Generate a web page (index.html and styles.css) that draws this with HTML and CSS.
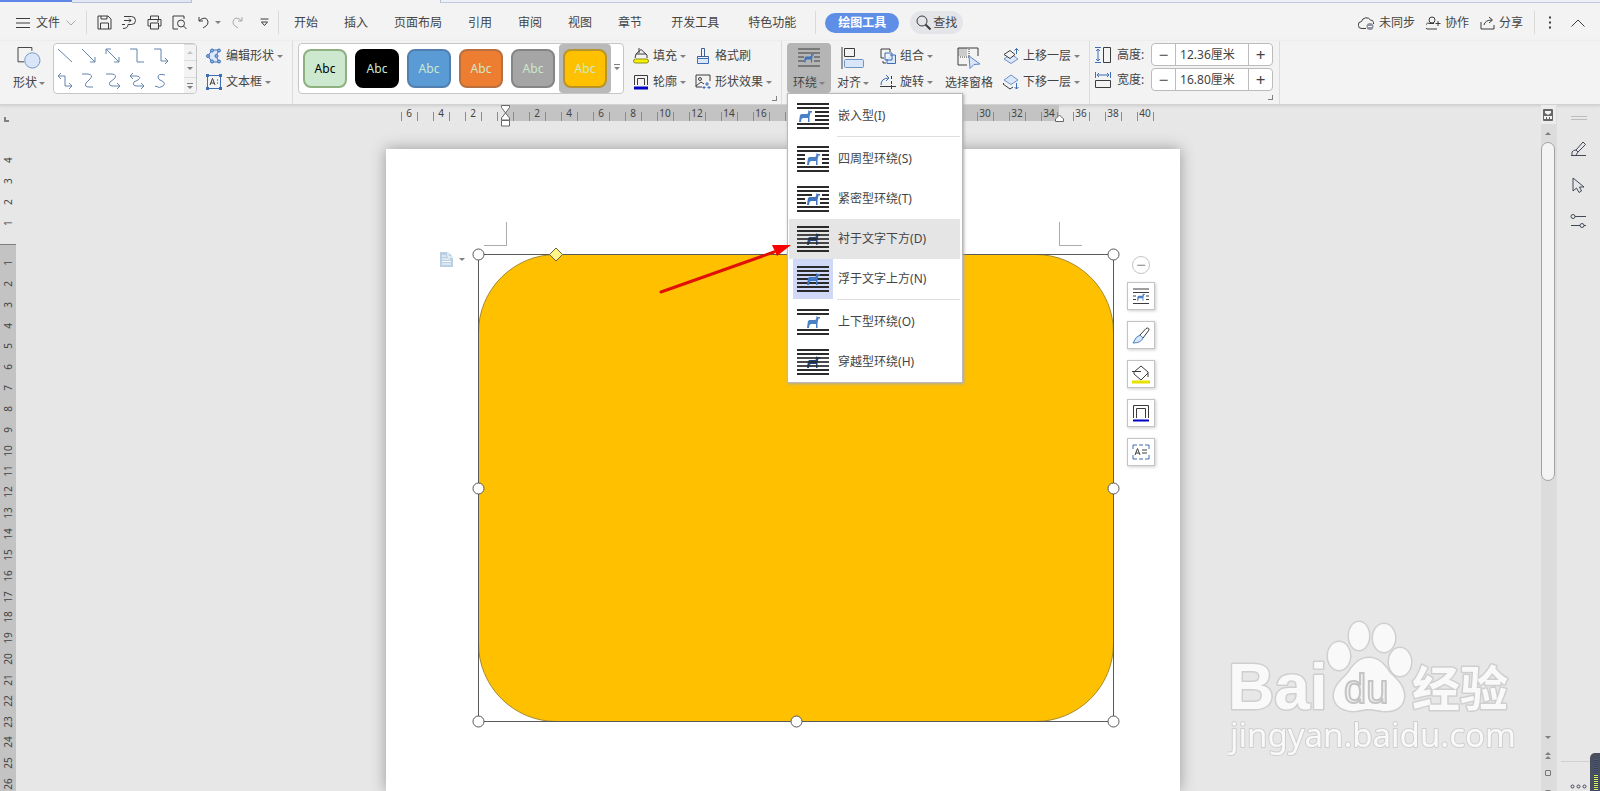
FILE: index.html
```
<!DOCTYPE html>
<html lang="zh-CN">
<head>
<meta charset="utf-8">
<title>绘图工具</title>
<link rel="stylesheet" href="styles.css">
</head>
<body>
  <svg class="defs" aria-hidden="true">
    <symbol id="dog" viewBox="0 0 13 12"><path d="M0 12L.5 8 1 5 2.500 4H7.500L9 3.500 9.500 0 10.500 1H13V2.500H11.500L10.500 7V12H9V8H4L2.500 9 2 12Z"/></symbol>
    <symbol id="bars" viewBox="0 0 32 26"><path d="M0 1H32M0 5H32M0 21H32M0 25H32" stroke="#2b2b2b" stroke-width="2"/></symbol>
    <symbol id="bars-mid" viewBox="0 0 32 26"><path d="M0 9H32M0 13H32M0 17H32" stroke="#2b2b2b" stroke-width="2"/></symbol>
  </svg>

  <div class="doctabs"><span class="doctab active"></span><span class="doctab"></span><span class="doctab-gap"></span><span class="doctab-rest"></span></div>

  <header class="menubar">
    <button class="file"><svg width="14" height="12" viewBox="0 0 14 12"><path d="M0 1.500H14M0 6H14M0 10.500H14"/></svg>文件<svg class="light" width="10" height="6" viewBox="0 0 10 6"><path d="M.5 .5L5 5 9.500 .5"/></svg></button>
    <span class="vline"></span>
    <div class="quick">
      <button aria-label="保存"><svg width="15" height="15" viewBox="0 0 15 15"><path d="M1 1H11L14 4V14H1ZM4 1V4H10V1M3.500 14V8H11.500V14"/></svg></button>
      <button aria-label="输出"><svg width="15" height="15" viewBox="0 0 15 15"><path d="M2 1.500H9.500A4 4 0 0 1 9.500 9.500H6Q6 13.500 1 13.500M2 5.500H9M7 3.500L9 5.500 7 7.500M0 9.500H3"/></svg></button>
      <button aria-label="打印"><svg width="15" height="15" viewBox="0 0 15 15"><path d="M3.500 4V1H11.500V4M3.500 11H1V4.500H14V11H11.500M3.500 8H11.500V14H3.500ZM10 6H12"/></svg></button>
      <button aria-label="打印预览"><svg width="15" height="15" viewBox="0 0 15 15"><path d="M6 14H1V1H12V4M11.500 11L14.500 14"/><circle cx="9" cy="8.500" r="3.500"/></svg></button>
      <button class="drop" aria-label="撤销"><svg width="13" height="13" viewBox="0 0 13 13"><path d="M2 1V5H6M2 5Q5 2 8 2A4.500 4.500 0 0 1 9 10L6 12"/></svg><i class="caret"></i></button>
      <button class="light" aria-label="恢复"><svg width="13" height="13" viewBox="0 0 13 13"><path d="M11 1V5H7M11 5Q8 2 5 2A4.500 4.500 0 0 0 4 10L7 12"/></svg></button>
      <button aria-label="自定义"><svg width="9" height="9" viewBox="0 0 9 9"><path d="M.5 1H8.500M1.500 4H7.500L4.500 7.500Z"/></svg></button>
    </div>
    <span class="vline"></span>
    <nav>
      <a href="#">开始</a><a href="#">插入</a><a href="#">页面布局</a><a href="#">引用</a><a href="#">审阅</a><a href="#">视图</a><a href="#">章节</a>
    </nav>
    <nav class="more">
      <a href="#">开发工具</a><a href="#">特色功能</a>
    </nav>
    <span class="vline"></span>
    <button class="current">绘图工具</button>
    <button class="search"><svg width="15" height="15" viewBox="0 0 15 15"><circle cx="6" cy="6" r="5"/><path d="M9.500 9.500L14.500 14.500" stroke-width="2"/></svg>查找</button>
    <div class="account">
      <button><svg width="17" height="14" viewBox="0 0 17 14"><path d="M8 12.500H4A3.500 3.500 0 0 1 3.500 5.500 5 5 0 0 1 12.500 4 3.500 3.500 0 0 1 15.500 8"/><circle cx="12" cy="10.500" r="3.500" fill="#8d93a0" stroke="none"/><path d="M10 10.500H14" stroke="#fff"/></svg>未同步</button>
      <button><svg width="15" height="14" viewBox="0 0 15 14"><circle cx="6" cy="4" r="3"/><path d="M8 7.500H4A3 3 0 0 0 1 13H11M9.500 7.500H14.500M12 5V10"/></svg>协作</button>
      <button><svg width="15" height="14" viewBox="0 0 15 14"><path d="M1 6V13H14V9M4 9Q5 4 12 4M9 1L12.500 4 9 7"/></svg>分享</button>
      <span class="vline"></span>
      <button class="dots" aria-label="更多"><svg width="3" height="13" viewBox="0 0 3 13"><path d="M0 1.500H2M0 6.500H2M0 11.500H2" stroke-width="2"/></svg></button>
      <button aria-label="收起"><svg width="14" height="8" viewBox="0 0 14 8"><path d="M.5 7.500L7 1 13.500 7.500"/></svg></button>
    </div>
  </header>

  <div class="ribbon">
    <button class="tall shape"><svg width="24" height="23" viewBox="0 0 24 23"><path d="M15 4V.5H.5V15.500H7"/><circle cx="15.500" cy="14" r="8" fill="#d9e6fa" stroke="#6f93c4"/></svg><span>形状<i class="caret"></i></span></button>
    <div class="shapes">
      <div class="shapes-grid">
        <svg viewBox="0 0 16 16"><path d="M1 1L15 14"/></svg>
        <svg viewBox="0 0 16 16"><path d="M1 1L14 14M14 9V14H9"/></svg>
        <svg viewBox="0 0 16 16"><path d="M1 1L14 14M14 9V14H9M1 6V1H6"/></svg>
        <svg viewBox="0 0 16 16"><path d="M1 1H8V14H15"/></svg>
        <svg viewBox="0 0 16 16"><path d="M1 1H8V13H15M12 10L15 13 12 16"/></svg>
        <svg viewBox="0 0 16 16"><path d="M1 3H8V13H15M12 10L15 13 12 16M4 0L1 3 4 6"/></svg>
        <svg viewBox="0 0 16 16"><path d="M1 1H7Q13 2 9 6L5 10Q3 14 8 14H12"/></svg>
        <svg viewBox="0 0 16 16"><path d="M1 1H7Q13 2 9 6L5 9Q3 13 8 13H15M12 10L15 13 12 16"/></svg>
        <svg viewBox="0 0 16 16"><path d="M1 3H8Q13 4 9 7L5 9Q3 13 8 13H15M12 10L15 13 12 16M4 0L1 3 4 6"/></svg>
        <svg viewBox="0 0 16 16"><path d="M12 2Q5 0 5 4 5 7 9 8 13 10 10 13 7 16 2 13"/></svg>
      </div>
      <div class="shapes-scroll">
        <button aria-label="上"><i class="caret up"></i></button>
        <button aria-label="下"><i class="caret"></i></button>
        <button aria-label="展开"><i class="caret bar"></i></button>
      </div>
    </div>
    <div class="pair">
      <button><svg width="16" height="16" viewBox="0 0 16 16"><path d="M6 2H13L10 8 13 14H6L2 8Z" fill="#dbe8fb" stroke="#3d6db5"/><g fill="#8fb4ee" stroke="#3d6db5"><circle cx="6" cy="2.500" r="1.500"/><circle cx="13" cy="2.500" r="1.500"/><circle cx="2" cy="8" r="1.500"/><circle cx="10.500" cy="8" r="1.500"/><circle cx="6" cy="13.500" r="1.500"/><circle cx="13" cy="13.500" r="1.500"/></g></svg>编辑形状<i class="caret"></i></button>
      <button><svg width="16" height="16" viewBox="0 0 16 16"><path d="M1.500 1.500H14.500V14.500H1.500Z" stroke="#3d6db5"/><path d="M4 11L6.500 4.500 9 11M5 9H8M11 6H12M11 9H12"/><path d="M0 0H3V3H0ZM13 0H16V3H13ZM0 13H3V16H0ZM13 13H16V16H13Z" fill="#3d6db5" stroke="none"/></svg>文本框<i class="caret"></i></button>
    </div>
    <span class="sep"></span>
    <div class="styles">
      <button class="swatch green">Abc</button>
      <button class="swatch black">Abc</button>
      <button class="swatch blue">Abc</button>
      <button class="swatch orange">Abc</button>
      <button class="swatch gray">Abc</button>
      <button class="swatch gold selected">Abc</button>
      <button class="expand" aria-label="展开样式"><i class="caret bar"></i></button>
    </div>
    <div class="pair">
      <button><svg width="16" height="16" viewBox="0 0 16 16"><path d="M2 10L3 6 8 1.500 14 7V10M3 6H13M6 0V5"/><rect x=".5" y="11" width="15" height="4" rx="2" fill="#f7f200" stroke="#8d8d20"/></svg>填充<i class="caret"></i></button>
      <button><svg width="16" height="16" viewBox="0 0 16 16"><path d="M1.500 11V1.500H14.500V11M4.500 11V4.500H11.500V11"/><path d="M1 14H15" stroke="#0000c0" stroke-width="3"/></svg>轮廓<i class="caret"></i></button>
    </div>
    <div class="pair">
      <button><svg width="16" height="16" viewBox="0 0 16 16"><path d="M6.500 8V.5H9.500V8M2.500 10.500V8.500H13.500V10.500" stroke="#3d5f96"/><path d="M2.500 10.500H13.500V15.500H2.500Z" fill="#dbe8fb" stroke="#3d6db5"/></svg>格式刷</button>
      <button><svg width="16" height="16" viewBox="0 0 16 16"><path d="M15 7V1H1V13H7"/><circle cx="5" cy="5" r="1.500"/><path d="M1 12L6 8 9 10" /><path d="M12 8V12M10 10H14M9 12V15M7.500 13.500H10.500M14 12V15M12.500 13.500H15.500" stroke="#3d6db5"/></svg>形状效果<i class="caret"></i></button>
      <i class="launcher"></i>
    </div>
    <span class="sep"></span>
    <div class="wrap">
      <button class="tall pressed"><svg width="22" height="20" viewBox="0 0 22 20"><path d="M0 1H22M0 5H22M0 9H6M16 9H22M0 13H6M16 13H22M0 18H22"/><use href="#dog" x="6" y="5" width="10" height="10" fill="#4573b8"/></svg><span>环绕<i class="caret"></i></span></button>
      <ul class="menu">
        <li><button><span class="ico"><svg width="32" height="26" viewBox="0 0 32 26"><use href="#bars"/><path d="M18 9H32M18 13H32M18 17H32" stroke="#2b2b2b" stroke-width="2"/><use href="#dog" x="2" y="7" width="13" height="12" fill="#4a80c5"/></svg></span>嵌入型(I)</button></li>
        <li class="split"><button><span class="ico"><svg width="32" height="26" viewBox="0 0 32 26"><use href="#bars"/><path d="M0 9H8M0 13H8M0 17H8M25 9H32M25 13H32M25 17H32" stroke="#2b2b2b" stroke-width="2"/><use href="#dog" x="10" y="7" width="13" height="12" fill="#4a80c5"/></svg></span>四周型环绕(S)</button></li>
        <li><button><span class="ico"><svg width="32" height="26" viewBox="0 0 32 26"><use href="#bars"/><path d="M0 9H15M0 13H8M0 17H9M25 9H32M23 13H32M23 17H32" stroke="#2b2b2b" stroke-width="2"/><use href="#dog" x="10" y="7" width="13" height="12" fill="#3f73bd"/></svg></span>紧密型环绕(T)</button></li>
        <li><button class="hover"><span class="ico"><svg width="32" height="26" viewBox="0 0 32 26"><use href="#bars"/><use href="#dog" x="10" y="7" width="13" height="12" fill="#234a86"/><use href="#bars-mid" opacity=".85"/></svg></span>衬于文字下方(D)</button></li>
        <li><button><span class="ico checked"><svg width="32" height="26" viewBox="0 0 32 26"><use href="#bars"/><use href="#bars-mid"/><use href="#dog" x="10" y="7" width="13" height="12" fill="#3f78c6"/></svg></span>浮于文字上方(N)</button></li>
        <li class="split"><button><span class="ico"><svg width="32" height="26" viewBox="0 0 32 26"><use href="#bars"/><use href="#dog" x="10" y="7" width="13" height="12" fill="#4a80c5"/></svg></span>上下型环绕(O)</button></li>
        <li><button><span class="ico"><svg width="32" height="26" viewBox="0 0 32 26"><use href="#bars"/><use href="#dog" x="10" y="7" width="13" height="12" fill="#1f4680"/><use href="#bars-mid" opacity=".85"/></svg></span>穿越型环绕(H)</button></li>
      </ul>
    </div>
    <button class="tall align"><svg width="24" height="22" viewBox="0 0 24 22"><path d="M1 0V22M3.500 1.500H13.500V9.500H3.500Z"/><rect x="3.500" y="12.500" width="19" height="8" rx="1" fill="#d9e6fa" stroke="#6f93c4"/></svg><span>对齐<i class="caret"></i></span></button>
    <div class="pair">
      <button><svg width="16" height="16" viewBox="0 0 16 16"><path d="M10 4V1H1V10H4M3 13V15H6"/><path d="M10 7H15.500V15.500H7V11" fill="#dbe8fb" stroke="#3d6db5"/><path d="M5 5H12V12H5Z" stroke="#3d6db5"/></svg>组合<i class="caret"></i></button>
      <button><svg width="16" height="16" viewBox="0 0 16 16"><path d="M1 11Q1 4 9 4M6 1L9 4 6 7" stroke="#3d6db5"/><path d="M0 12.500H16M11.500 2V5M11.500 7V10M11.500 11V15"/></svg>旋转<i class="caret"></i></button>
    </div>
    <button class="tall pane"><svg width="24" height="22" viewBox="0 0 24 22"><path d="M1 1H10V9H1Z" fill="#ccc" stroke="none"/><path d="M10 18H1V1H21V9"/><path d="M12 2V10H2" stroke-dasharray="1 1"/><path d="M12 9L23 17 17 17.500 13 21.500Z" fill="#d9e6fa" stroke="#5c86c6"/></svg><span>选择窗格</span></button>
    <div class="pair">
      <button><svg width="16" height="16" viewBox="0 0 16 16"><path d="M1 11L8 6 15 11 8 15.500Z" fill="#dbe8fb" stroke="#6f93c4"/><path d="M1 6.500L7 2.500 12 6.500 7 10.500Z" fill="#f3f3f3"/><path d="M13.500 6V.5M11.500 2.500L13.500 .5 15.500 2.500" stroke="#3d6db5"/></svg>上移一层<i class="caret"></i></button>
      <button><svg width="16" height="16" viewBox="0 0 16 16"><path d="M1 9L0 10 7 15 10 13"/><path d="M1 6L8 1 15 6 8 10.500Z" fill="#dbe8fb" stroke="#6f93c4"/><path d="M13.500 9V15M11.500 13L13.500 15 15.500 13" stroke="#3d6db5"/></svg>下移一层<i class="caret"></i></button>
    </div>
    <span class="sep"></span>
    <div class="size">
      <svg width="16" height="16" viewBox="0 0 16 16"><path d="M8.500 .5H15.500V15.500H8.500Z"/><path d="M0 .5H6M0 15.500H6M3 2V14M1 4L3 2 5 4M1 12L3 14 5 12" stroke="#3d6db5"/></svg>
      <label for="height">高度:</label>
      <div class="stepper"><button aria-label="减小高度">−</button><input id="height" type="text" value="12.36厘米"><button aria-label="增大高度">+</button></div>
      <svg width="16" height="16" viewBox="0 0 16 16"><path d="M.5 8.500H15.500V15.500H.5Z"/><path d="M.5 0V6M15.500 0V6M2 3H14M4 1L2 3 4 5M12 1L14 3 12 5" stroke="#3d6db5"/></svg>
      <label for="width">宽度:</label>
      <div class="stepper"><button aria-label="减小宽度">−</button><input id="width" type="text" value="16.80厘米"><button aria-label="增大宽度">+</button></div>
      <i class="launcher"></i>
    </div>
    <span class="sep"></span>
  </div>

  <main class="workspace">
    <div class="vruler">
      <i class="tabstop"></i>
      <div class="vmargin"><span>4</span><span>3</span><span>2</span><span>1</span></div>
      <div class="vbody"><span>1</span><span>2</span><span>3</span><span>4</span><span>5</span><span>6</span><span>7</span><span>8</span><span>9</span><span>10</span><span>11</span><span>12</span><span>13</span><span>14</span><span>15</span><span>16</span><span>17</span><span>18</span><span>19</span><span>20</span><span>21</span><span>22</span><span>23</span><span>24</span><span>25</span><span>26</span></div>
    </div>

    <div class="canvas">
      <div class="hruler">
        <span>6</span><span>4</span><span>2</span><span></span><span>2</span><span>4</span><span>6</span><span>8</span><span>10</span><span>12</span><span>14</span><span>16</span><span></span><span></span><span></span><span></span><span></span><span></span><span>30</span><span>32</span><span>34</span><span>36</span><span>38</span><span>40</span>
        <svg class="indent" width="11" height="22" viewBox="0 0 11 22"><path d="M1.500 .5H9.500V2.500L5.500 8 1.500 2.500ZM5.500 8L9.500 13V15H1.500V13ZM1.500 15.500H9.500V21H1.500Z"/></svg>
        <svg class="indent end" width="11" height="8" viewBox="0 0 11 8"><path d="M5.500 1L9.500 5V7.500H1.500V5Z"/></svg>
      </div>
      <div class="page">
        <i class="crop left"></i>
        <i class="crop right"></i>
        <button class="layout" aria-label="布局选项"><svg width="13" height="15" viewBox="0 0 13 15"><path d="M0 0H8L13 5V15H0Z" fill="#b9d0e4"/><path d="M8 0V5H13M2 4H6M2 7H10M2 9.500H11M2 12H11" stroke="#fff"/></svg><i class="caret"></i></button>

        <svg class="drawing" width="648" height="480" viewBox="0 0 648 480">
          <rect x="6.500" y="6.500" width="635" height="467" rx="78" fill="#ffc000" stroke="#a68a2a"/>
          <rect x="6.500" y="6.500" width="635" height="467" fill="none" stroke="#5a5a5a"/>
          <g fill="#fff" stroke="#555">
            <circle cx="6.500" cy="6.500" r="5.500"/><circle cx="324.500" cy="6.500" r="5.500"/><circle cx="641.500" cy="6.500" r="5.500"/>
            <circle cx="6.500" cy="240.500" r="5.500"/><circle cx="641.500" cy="240.500" r="5.500"/>
            <circle cx="6.500" cy="473.500" r="5.500"/><circle cx="324.500" cy="473.500" r="5.500"/><circle cx="641.500" cy="473.500" r="5.500"/>
          </g>
          <path d="M84 0L90.500 6.500 84 13 77.500 6.500Z" fill="#fff58c" stroke="#6d6330"/>
        </svg>

        <svg class="pointer" width="134" height="52" viewBox="0 0 134 52"><path d="M3 49L116 9" stroke="#e01005" stroke-width="3" stroke-linecap="round"/><path d="M133 2L114 2 119 13Z" fill="#fa0000"/></svg>

        <div class="floatbar">
          <button class="fold" aria-label="收起">−</button>
          <button aria-label="环绕"><svg width="18" height="17" viewBox="0 0 18 17"><path d="M1 1H17M1 4.500H17M1 8H4M14 8H17M1 11.500H4M14 11.500H17M1 15.500H17"/><use href="#dog" x="5" y="5" width="8" height="8" fill="#4a80c5"/></svg></button>
          <button aria-label="样式"><svg width="18" height="17" viewBox="0 0 18 17"><path d="M8 8L14 1.500Q17 0 17 3L11 11Z"/><path d="M8 8L11 11Q9 16 1 16 4 9 8 8Z" fill="#d9e6fa" stroke="#4a7fc0"/></svg></button>
          <button aria-label="填充"><svg width="18" height="19" viewBox="0 0 18 19"><path d="M0 6.500H9M2 7L9 1 16 7V12M2 7V9L9 15 16 8"/><path d="M0 17H18" stroke="#e8e000" stroke-width="3"/></svg></button>
          <button aria-label="轮廓"><svg width="18" height="18" viewBox="0 0 18 18"><path d="M1.500 14V1.500H16.500V14M4.500 14V4.500H13.500V14"/><path d="M1 16.500H17" stroke="#0000c0" stroke-width="2"/></svg></button>
          <button aria-label="文本框"><svg width="18" height="16" viewBox="0 0 18 16"><path d="M1 5V1H5M7 1H11M13 1H17V5M1 11V15H5M7 15H11M13 15H17V11" stroke="#3d6db5"/><path d="M3 11L5.500 4.500 8 11M4 9H7M10 6H15M10 9H15"/></svg></button>
        </div>
      </div>
    </div>

    <div class="scrollbar">
      <svg class="browse" width="10" height="12" viewBox="0 0 10 12"><rect width="10" height="12" rx="1" fill="#666"/><path d="M2 2H8V4L5 6 2 4ZM1 7H9V10H1Z" fill="#f3f3f3"/><path d="M3.500 10V8M6.500 10V8" stroke="#666"/></svg>
      <button aria-label="向上滚动"><i class="caret up"></i></button>
      <div class="thumb"></div>
      <div class="track-end">
        <button aria-label="向下滚动"><i class="caret"></i></button>
        <button aria-label="上一页"><i class="caret up"></i><i class="caret up"></i></button>
        <button aria-label="选择浏览对象"><i class="square"></i></button>
        <button aria-label="下一页"><i class="caret"></i></button>
      </div>
    </div>

    <aside class="sidepane">
      <i class="grip"></i>
      <button aria-label="样式"><svg width="17" height="16" viewBox="0 0 17 16"><path d="M1 14.500H16M2 14V11Q3 9 6 9L13 1 15.500 3.500 8 11 6 14M6 9L8 11"/></svg></button>
      <button aria-label="选择"><svg width="13" height="17" viewBox="0 0 13 17"><path d="M1 1V14L4.500 11 7 15.500 9.500 14 7.500 10H12Z"/></svg></button>
      <button aria-label="设置"><svg width="17" height="14" viewBox="0 0 17 14"><circle cx="3" cy="2.500" r="2"/><path d="M5 2.500H16M1 11.500H10M14 11.500H16"/><circle cx="12" cy="11.500" r="2"/></svg></button>
      <div class="sidefoot"><button aria-label="更多"><svg width="17" height="5" viewBox="0 0 17 5"><circle cx="2.500" cy="2.500" r="1.500"/><circle cx="8.500" cy="2.500" r="1.500"/><circle cx="14.500" cy="2.500" r="1.500"/></svg></button></div>
    </aside>
  </main>

  <svg class="watermark" width="290" height="146" viewBox="0 0 290 146">
    <g class="wm">
      <text class="wm-bai" x="0" y="92">Bai</text>
      <ellipse cx="111" cy="39" rx="11" ry="14"/><ellipse cx="131" cy="19" rx="10" ry="14"/><ellipse cx="156" cy="21" rx="11" ry="14"/><ellipse cx="172" cy="45" rx="11" ry="14"/>
      <path d="M141 41C150 41 156 47 161 55C166 61 176 67 176 79C176 89 168 94 158 94C151 94 147 92 141 92C135 92 131 94 124 94C113 93 106 87 106 79C106 67 116 62 121 55C126 47 132 41 141 41Z"/>
      <text class="wm-jy" x="184" y="89">经验</text>
      <text class="wm-url" x="2" y="130">jingyan.baidu.com</text>
    </g>
    <text class="wm-du" x="116" y="86">du</text>
  </svg>
  <div class="meter"></div>
</body>
</html>
```

FILE: styles.css
```
* {
  box-sizing: border-box;
}

body {
  margin: 0;
  height: 100vh;
  display: flex;
  flex-direction: column;
  overflow: hidden;
  background: #e7e7e7;
  color: #444;
  font: 12px/16px "Noto Sans", "Noto Sans CJK SC", sans-serif;
}

button, input {
  margin: 0;
  padding: 0;
  border: 0;
  background: none;
  color: inherit;
  font: inherit;
}

button {
  display: flex;
  align-items: center;
  white-space: nowrap;
}

svg {
  flex: none;
  fill: none;
  stroke: #3c3c3c;
}

symbol, use {
  stroke: none;
}

.defs {
  position: absolute;
  width: 0;
  height: 0;
}

a {
  color: inherit;
  text-decoration: none;
}

.caret {
  flex: none;
  border: 3px solid transparent;
  border-top-color: #808080;
  border-bottom: 0;
}

.caret.up {
  border-top: 0;
  border-bottom: 3px solid #808080;
}

.caret.bar {
  position: relative;
}

.caret.bar::before {
  content: "";
  position: absolute;
  left: -3px;
  top: -6px;
  width: 6px;
  height: 1px;
  background: #808080;
}

/* document tabs */
.doctabs {
  flex: none;
  display: flex;
  height: 3px;
  background: #f3f3f3;
}

.doctab {
  width: 120px;
  background: #e2e7f3;
  border-right: 1px solid #b5bfd8;
  border-bottom: 1px solid #b5bfd8;
}

.doctab.active {
  width: 72px;
  height: 2px;
  background: #5f87ea;
  border: 0;
}

.doctab-gap {
  width: 248px;
}

.doctab-rest {
  flex: 1;
  background: #eef0f7;
  border-left: 1px solid #b5bfd8;
  border-bottom: 1px solid #c3c8dc;
}

/* menu bar */
.menubar {
  flex: none;
  display: flex;
  align-items: center;
  height: 38px;
  padding: 1px 15px 0 16px;
  background: #f3f3f3;
}

.vline {
  width: 1px;
  height: 23px;
  background: #dadada;
}

.light svg, svg.light {
  stroke: #a8a8a8;
}

.file {
  gap: 6px;
  margin-right: 10px;
}

.quick {
  display: flex;
  align-items: center;
  gap: 10px;
  margin: 0 9px 0 10px;
}

.quick .drop {
  gap: 5px;
}

.quick button:last-child {
  margin-left: 6px;
}

nav {
  display: flex;
  gap: 26px;
  margin-left: 15px;
}

nav.more {
  gap: 29px;
  margin: 0 19px 0 29px;
}

.current {
  height: 20px;
  margin: 0 11px 0 9px;
  padding: 0 13px;
  border-radius: 10px;
  background: #5f8ee6;
  color: #fff;
  font-weight: bold;
}

.search {
  gap: 2px;
  height: 23px;
  padding: 0 6px;
  border-radius: 12px;
  background: #e4e5e9;
}

.account {
  display: flex;
  align-items: center;
  gap: 11px;
  margin-left: auto;
}

.account button {
  gap: 4px;
}

.account .dots {
  margin: 0 8px 0 3px;
}

/* ribbon */
.ribbon {
  flex: none;
  display: flex;
  gap: 9px;
  height: 64px;
  padding: 2px 0 0 13px;
  background: #f3f3f3;
  border-bottom: 1px solid #d2d2d2;
  box-shadow: 0 1px 3px #ccc;
}

.sep {
  width: 1px;
  background: #dcdcdc;
  margin: -2px -4px 0 0;
}

.tall {
  flex-direction: column;
  justify-content: space-between;
  width: 32px;
  height: 50px;
  padding: 4px 0 2px;
  margin-right: -1px;
}

.tall span {
  display: flex;
  align-items: center;
  gap: 2px;
}

.tall svg {
  height: 22px;
}

.pair {
  position: relative;
  display: grid;
  grid-template-rows: 26px 26px;
  height: 52px;
}

.pair button {
  gap: 4px;
}

.pair .caret {
  margin-left: -1px;
}

.launcher {
  position: absolute;
  right: -5px;
  bottom: -6px;
  width: 5px;
  height: 5px;
  border: solid #808080;
  border-width: 0 1px 1px 0;
}

.shapes, .styles {
  display: flex;
  height: 51px;
  background: #fff;
  border: 1px solid #c6c6c6;
  border-radius: 4px;
}

.shapes {
  width: 144px;
  justify-content: space-between;
}

.shapes-grid {
  display: grid;
  grid-template-columns: repeat(5, 16px);
  gap: 8px;
  padding: 4px 3px;
}

.shapes-grid svg {
  width: 16px;
  height: 16px;
  stroke: #6585ad;
}

.shapes-scroll {
  display: grid;
  grid-template-rows: 1fr 1fr 1fr;
  width: 12px;
  background: #f3f3f3;
  border-radius: 0 4px 4px 0;
}

.shapes-scroll button {
  justify-content: center;
  border-top: 1px solid #dcdcdc;
}

.shapes-scroll button:last-child {
  padding-top: 4px;
}

.shapes-scroll .up {
  opacity: .4;
}

.styles {
  width: 326px;
}

.swatch {
  justify-content: center;
  width: 52px;
  height: 49px;
  padding: 0;
  border: 4px solid transparent;
  border-radius: 4px;
  background-clip: padding-box;
  position: relative;
  z-index: 0;
}

.swatch::before {
  content: "";
  position: absolute;
  inset: 1px 0;
  z-index: -1;
  border: 2px solid #8fb07f;
  border-radius: 8px;
  background: #cce8cf;
}

.swatch.green { color: #000; }
.swatch.black { color: #cce8cf; }
.swatch.blue, .swatch.orange, .swatch.gray, .swatch.gold { color: #cce8cf; }
.swatch.black::before { background: #000; border-color: #000; }
.swatch.blue::before { background: #5b9bd5; border-color: #5280ae; }
.swatch.orange::before { background: #ed7d31; border-color: #b87040; }
.swatch.gray::before { background: #a5a5a5; border-color: #858585; }
.swatch.gold::before { background: #ffc000; border-color: #b8942a; }
.swatch.selected { background: #b9b9b9; background-clip: border-box; }

.expand {
  flex: 1;
  justify-content: center;
}

.wrap {
  position: relative;
}

.pressed {
  width: 44px;
  margin: 0;
  border-radius: 4px;
  background: #b5b5b5;
}

.align {
  margin: 0 2px 0 -3px;
}

.pane {
  width: 48px;
  margin: 0 1px 0 3px;
}

.size {
  position: relative;
  display: grid;
  grid-template: 23px 23px / 16px 28px 122px;
  gap: 2px 6px;
  align-items: center;
  align-content: start;
  margin-right: -3px;
}

.size .launcher {
  right: 0;
  bottom: 4px;
}

.stepper {
  display: flex;
  height: 23px;
  background: #fff;
  border: 1px solid #bcbcbc;
  border-radius: 4px;
}

.stepper button {
  width: 23px;
  justify-content: center;
  font-size: 17px;
}

.stepper input {
  flex: 1;
  min-width: 0;
  padding-left: 4px;
  border: solid #bcbcbc;
  border-width: 0 1px;
}

/* wrap menu */
.menu {
  position: absolute;
  left: 0;
  top: 50px;
  z-index: 2;
  width: 176px;
  margin: 0;
  padding: 2px 2px 0 1px;
  list-style: none;
  background: #fff;
  border: 1px solid #b9b9b9;
  box-shadow: 1px 1px 3px #aaa;
}

.menu button {
  width: 100%;
  height: 40px;
  padding-left: 4px;
  gap: 5px;
}

.menu .hover {
  background: #e5e5e5;
}

.menu .split::before {
  content: "";
  display: block;
  height: 1px;
  margin: 0 0 2px 48px;
  background: #dfdfdf;
}

.ico {
  display: flex;
  justify-content: center;
  align-items: center;
  width: 40px;
  height: 40px;
}

.ico.checked {
  background: #cfd8f6;
}

/* workspace */
.workspace {
  flex: 1;
  min-height: 0;
  display: flex;
}

.vruler {
  width: 16px;
  display: flex;
  flex-direction: column;
  color: #444;
  overflow: hidden;
}

.tabstop {
  width: 5px;
  height: 5px;
  margin: 12px 0 28px 4px;
  border: solid #808080;
  border-width: 0 0 2px 2px;
}

.vruler span {
  display: flex;
  align-items: center;
  justify-content: center;
  writing-mode: vertical-rl;
  transform: rotate(180deg);
  width: 16px;
  font-size: 10px;
}

.vmargin {
  padding-bottom: 10px;
}

.vmargin span {
  height: 21px;
}

.vbody {
  flex: 1;
  display: flex;
  flex-direction: column;
  margin-bottom: -4px;
  padding-top: 8px;
  background: #c3c3c3;
  border-top: 1px solid #808080;
}

.vbody span {
  flex: 1;
}

.canvas {
  flex: 1;
  min-width: 0;
  display: flex;
  flex-direction: column;
  align-items: center;
  padding-left: 9px;
  overflow: hidden;
}

.hruler {
  flex: none;
  position: relative;
  display: flex;
  width: 794px;
  height: 16px;
  padding-left: 15px;
  color: #444;
  background: linear-gradient(#c3c3c3, #c3c3c3) 119px 0 / 554px 16px no-repeat;
}

.hruler span {
  flex: none;
  width: 32px;
  padding-right: 16px;
  display: flex;
  justify-content: center;
  font-size: 10px;
  background:
    linear-gradient(#8c8c8c, #8c8c8c) 0 7px / 1px 9px no-repeat,
    linear-gradient(#8c8c8c, #8c8c8c) 16px 7px / 1px 9px no-repeat;
}

.indent {
  position: absolute;
  left: 114px;
  top: 0;
  fill: #fff;
  stroke: #666;
}

.indent.end {
  left: 668px;
  top: 9px;
}

.page {
  flex: 1;
  position: relative;
  width: 794px;
  margin-top: 28px;
  background: #fff;
  box-shadow: 0 0 14px #999;
}

.crop {
  position: absolute;
  top: 73px;
  left: 98px;
  width: 23px;
  height: 24px;
  border: solid #ababab;
  border-width: 0 1px 1px 0;
}

.crop.right {
  left: 673px;
  border-width: 0 0 1px 1px;
}

.layout {
  position: absolute;
  left: 54px;
  top: 103px;
  gap: 6px;
}

.layout svg {
  stroke: none;
}

.drawing {
  position: absolute;
  left: 86px;
  top: 99px;
  stroke: none;
}

.pointer {
  position: absolute;
  left: 272px;
  top: 94px;
  z-index: 3;
  stroke: none;
}

.floatbar {
  position: absolute;
  left: 741px;
  top: 107px;
  display: flex;
  flex-direction: column;
  align-items: center;
  gap: 11px;
}

.floatbar button {
  justify-content: center;
  width: 28px;
  height: 28px;
  background: #fff;
  border: 1px solid #c4c4c4;
  box-shadow: 1px 1px 3px #ccc;
}

.floatbar .fold {
  width: 18px;
  height: 18px;
  margin-bottom: -3px;
  border-radius: 9px;
  box-shadow: none;
  color: #888;
  font-size: 17px;
}

/* scroll bar */
.scrollbar {
  width: 15px;
  display: flex;
  flex-direction: column;
  background: #dcdcdc;
}

.scrollbar button {
  width: 14px;
  height: 18px;
  flex-direction: column;
  justify-content: center;
  gap: 1px;
}

.browse {
  box-sizing: content-box;
  padding: 4px 3px 3px 2px;
  background: #ececec;
  stroke: none;
}

.thumb {
  height: 45vh;
  width: 14px;
  margin-bottom: auto;
  flex: 0 1 339px;
  background: #f4f4f4;
  border: 1px solid #a2a2a2;
  border-radius: 7px;
}

.track-end {
  margin-bottom: -9px;
}

.square {
  width: 6px;
  height: 6px;
  border: 1px solid #777;
  border-radius: 1px;
}

/* side pane */
.sidepane {
  width: 44px;
  display: flex;
  flex-direction: column;
  align-items: center;
  border-left: 1px solid #dedede;
}

.sidepane button {
  width: 36px;
  height: 36px;
  justify-content: center;
}

.sidepane svg {
  stroke: #414958;
}

.grip {
  width: 16px;
  height: 4px;
  margin: 11px 0 11px;
  border: solid #bdbdbd;
  border-width: 1px 0;
}

.sidefoot {
  display: flex;
  justify-content: center;
  width: 36px;
  height: 30px;
  margin-top: auto;
  border-top: 1px solid #d0d0d0;
}

.sidefoot button {
  height: 48px;
}

.meter {
  position: fixed;
  right: 0;
  bottom: 0;
  width: 10px;
  height: 38px;
  border: solid #4a4f5e;
  border-width: 6px 2px 0 4px;
  border-radius: 5px 0 0 0;
  background:
    repeating-linear-gradient(transparent 0 1px, #3b4152 1px 2px),
    linear-gradient(#4a5880 16px, #d4f56a 16px);
}

/* watermark */
.watermark {
  position: fixed;
  right: 82px;
  bottom: 28px;
  stroke: none;
}

.wm {
  fill: #f9f9f9;
  stroke: #cfcfcf;
  stroke-width: 3px;
  stroke-linejoin: round;
  paint-order: stroke;
}

.wm-bai {
  font: bold 64px "Liberation Sans", sans-serif;
}

.wm-jy {
  font: bold 48px "Noto Sans CJK SC", sans-serif;
}

.wm-url {
  font: 33px "Noto Sans", sans-serif;
  stroke-width: 2px;
}

.wm-du {
  font: 40px "Liberation Sans", sans-serif;
  fill: #f3f3f3;
  stroke: #c4c4c4;
  stroke-width: 2px;
}
```
